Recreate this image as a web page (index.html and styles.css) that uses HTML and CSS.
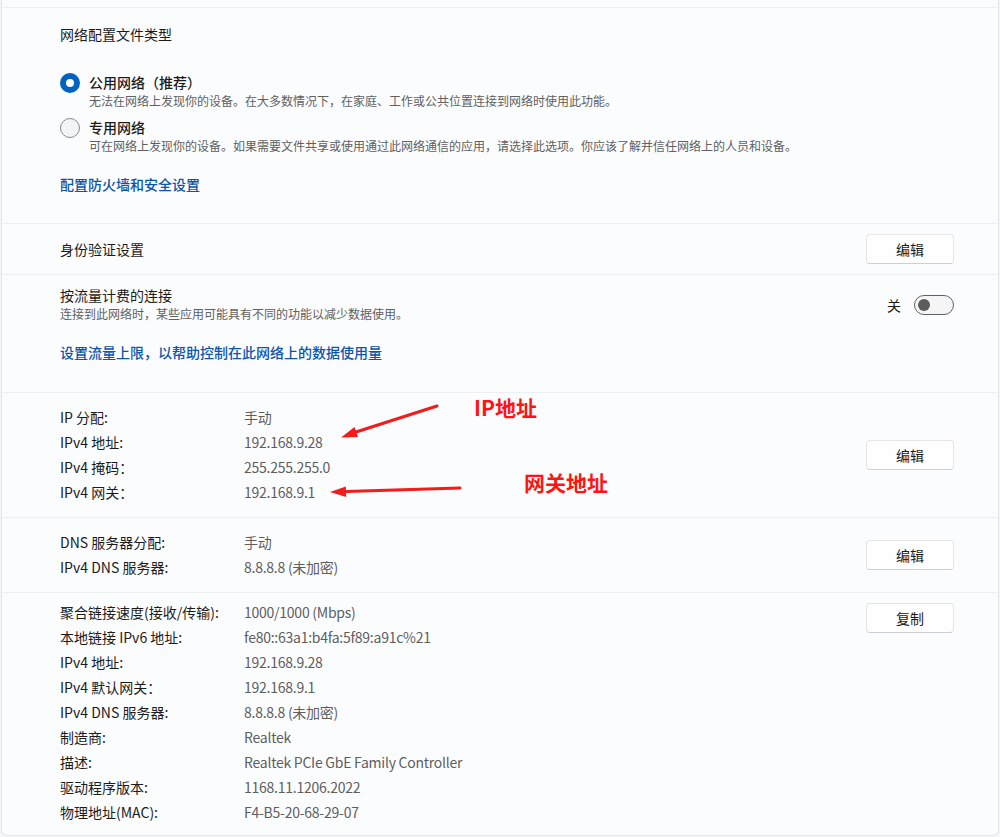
FILE: index.html
```html
<!DOCTYPE html>
<html lang="zh-CN">
<head>
<meta charset="utf-8">
<title>网络属性</title>
<link rel="stylesheet" href="styles.css">
</head>
<body>
<div class="card">
  <div class="stub"></div>

  <section class="sec s1">
    <div class="title">网络配置文件类型</div>
    <div class="radio-row first">
      <span class="radio on"></span>
      <div class="radio-text">
        <div class="r-title">公用网络（推荐）</div>
        <div class="desc">无法在网络上发现你的设备。在大多数情况下，在家庭、工作或公共位置连接到网络时使用此功能。</div>
      </div>
    </div>
    <div class="radio-row">
      <span class="radio"></span>
      <div class="radio-text">
        <div class="r-title">专用网络</div>
        <div class="desc">可在网络上发现你的设备。如果需要文件共享或使用通过此网络通信的应用，请选择此选项。你应该了解并信任网络上的人员和设备。</div>
      </div>
    </div>
    <a class="link l1" href="#">配置防火墙和安全设置</a>
  </section>

  <section class="sec s2">
    <div class="title">身份验证设置</div>
    <button class="btn">编辑</button>
  </section>

  <section class="sec s3">
    <div class="head">
      <div class="head-text">
        <div class="r-title plain">按流量计费的连接</div>
        <div class="desc">连接到此网络时，某些应用可能具有不同的功能以减少数据使用。</div>
      </div>
      <div class="toggle-wrap">
        <span class="toggle-label">关</span>
        <span class="toggle"><span class="knob"></span></span>
      </div>
    </div>
    <a class="link l2" href="#">设置流量上限，以帮助控制在此网络上的数据使用量</a>
  </section>

  <section class="sec s4 info">
    <div class="grid">
      <div class="k">IP 分配:</div><div class="v">手动</div>
      <div class="k">IPv4 地址:</div><div class="v">192.168.9.28</div>
      <div class="k">IPv4 掩码：</div><div class="v">255.255.255.0</div>
      <div class="k">IPv4 网关：</div><div class="v">192.168.9.1</div>
    </div>
    <button class="btn">编辑</button>
  </section>

  <section class="sec s5 info">
    <div class="grid">
      <div class="k">DNS 服务器分配:</div><div class="v">手动</div>
      <div class="k">IPv4 DNS 服务器:</div><div class="v">8.8.8.8 (未加密)</div>
    </div>
    <button class="btn">编辑</button>
  </section>

  <section class="sec s6 info">
    <div class="grid">
      <div class="k">聚合链接速度(接收/传输):</div><div class="v">1000/1000 (Mbps)</div>
      <div class="k">本地链接 IPv6 地址:</div><div class="v">fe80::63a1:b4fa:5f89:a91c%21</div>
      <div class="k">IPv4 地址:</div><div class="v">192.168.9.28</div>
      <div class="k">IPv4 默认网关：</div><div class="v">192.168.9.1</div>
      <div class="k">IPv4 DNS 服务器:</div><div class="v">8.8.8.8 (未加密)</div>
      <div class="k">制造商:</div><div class="v">Realtek</div>
      <div class="k">描述:</div><div class="v">Realtek PCIe GbE Family Controller</div>
      <div class="k">驱动程序版本:</div><div class="v">1168.11.1206.2022</div>
      <div class="k">物理地址(MAC):</div><div class="v">F4-B5-20-68-29-07</div>
    </div>
    <button class="btn top">复制</button>
  </section>
</div>

<svg class="arrows" width="1000" height="837" viewBox="0 0 1000 837" aria-hidden="true">
  <line x1="437" y1="406" x2="356" y2="432" stroke="#f51b1b" stroke-width="3" stroke-linecap="round"/>
  <polygon points="341,437.5 358,437 354.5,427" fill="#f51b1b"/>
  <line x1="460" y1="488" x2="346" y2="491.5" stroke="#f51b1b" stroke-width="3" stroke-linecap="round"/>
  <polygon points="330,492 346.2,497 345.8,486.5" fill="#f51b1b"/>
</svg>
<div class="note n1">IP地址</div>
<div class="note n2">网关地址</div>
</body>
</html>
```

FILE: styles.css
```css
* { box-sizing: border-box; }

body {
  margin: 0;
  width: 1000px;
  height: 837px;
  overflow: hidden;
  position: relative;
  background: #f4f6f9;
  font-family: "Noto Sans CJK SC", sans-serif;
  font-size: 14px;
  color: #1b1b1b;
}

.card {
  margin: 0 1px;
  background: #fbfcfe;
  border: 1px solid #e3e6ea;
  border-top: none;
  border-radius: 0 0 6px 6px;
}

.stub { height: 7px; }

.sec {
  border-top: 1px solid #eceef2;
  padding-left: 58px;
  padding-right: 44px;
}

.title { line-height: 20px; }

/* section 1 */
.s1 { padding-top: 16px; padding-bottom: 29px; }
.radio-row { display: flex; margin-top: 8px; }
.radio-row.first { margin-top: 29px; }
.radio {
  width: 20px;
  height: 20px;
  border-radius: 50%;
  border: 1px solid #8b8b8b;
  background: #f3f4f6;
  margin-right: 9px;
  flex: none;
}
.radio.on {
  border: 6px solid #0063c1;
  background: #ffffff;
}
.r-title { line-height: 19px; font-weight: 500; }
.r-title.plain { font-weight: 400; }
.desc { font-size: 12px; line-height: 18px; color: #606060; }

.link {
  display: block;
  color: #0a55ad;
  text-decoration: none;
  line-height: 20px;
  font-weight: 500;
}
.l1 { margin-top: 19px; }
.l2 { margin-top: 19px; }

/* buttons */
.btn {
  width: 88px;
  height: 30px;
  background: #fefefe;
  border: 1px solid #e5e5e5;
  border-bottom-color: #cfcfcf;
  border-radius: 4px;
  font-family: "Noto Sans CJK SC", sans-serif;
  font-size: 14px;
  color: #1b1b1b;
  padding: 0;
  flex: none;
}

/* section 2 */
.s2 {
  display: flex;
  align-items: center;
  justify-content: space-between;
  height: 51px;
}

/* section 3 */
.s3 { padding-top: 11px; padding-bottom: 30px; }
.head { display: flex; align-items: center; justify-content: space-between; }
.toggle-wrap { display: flex; align-items: center; }
.toggle-label { line-height: 20px; margin-right: 13px; }
.toggle {
  width: 40px;
  height: 20px;
  border: 1px solid #616161;
  border-radius: 10px;
  background: #f5f5f5;
  display: flex;
  align-items: center;
  padding-left: 3px;
}
.knob {
  width: 12px;
  height: 12px;
  border-radius: 50%;
  background: #5c5c5c;
}

/* info sections */
.info {
  display: flex;
  align-items: center;
  justify-content: space-between;
}
.grid {
  display: grid;
  grid-template-columns: 184px auto;
  line-height: 25px;
}
.k { color: #1b1b1b; }
.v { color: #5e5e5e; letter-spacing: -0.25px; }
.s4 { padding-top: 12px; padding-bottom: 12px; }
.s5 { padding-top: 12px; padding-bottom: 12px; }
.s6 { padding-top: 7px; padding-bottom: 10px; align-items: flex-start; }
.btn.top { margin-top: 3px; }

/* annotations overlay */
.arrows { position: absolute; left: 0; top: 0; pointer-events: none; }
.note {
  position: absolute;
  color: #ff1414;
  font-family: "Noto Sans CJK SC", sans-serif;
  font-weight: 700;
  font-size: 21px;
  line-height: 26px;
  white-space: nowrap;
}
.n1 { left: 474px; top: 394px; }
.n2 { left: 524px; top: 469px; }
```
